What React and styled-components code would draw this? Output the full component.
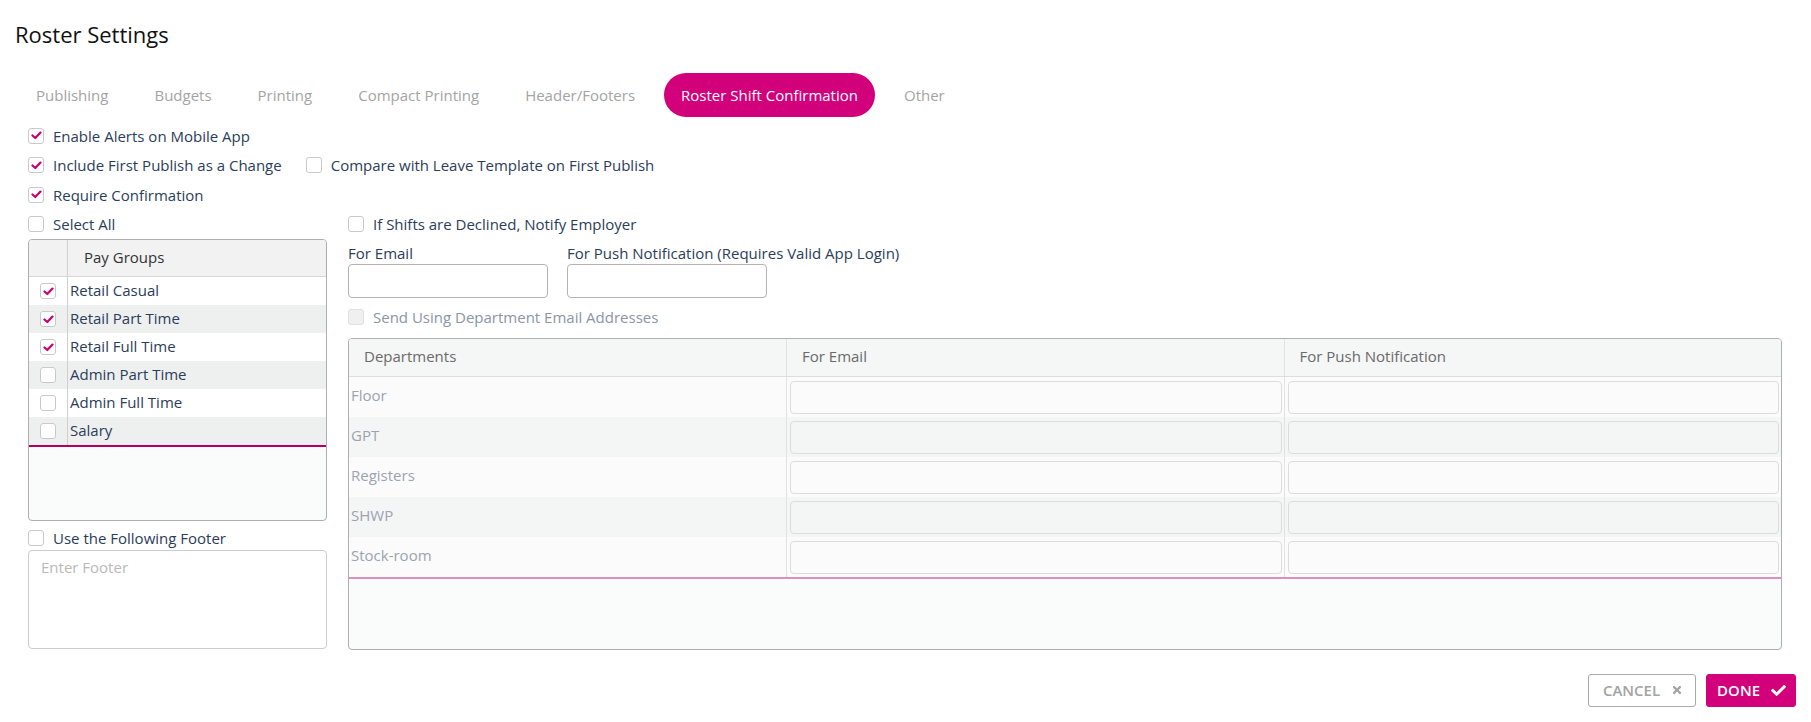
import React from "react";
import styled, { createGlobalStyle } from "styled-components";
import { FaTimes, FaCheck } from "react-icons/fa";

const GlobalStyle = createGlobalStyle`
  html, body { margin: 0; padding: 0; background: #ffffff; }
  body { font-family: "Open Sans", "Liberation Sans", sans-serif; color: #2d3e5b; }
  * { box-sizing: border-box; }
`;

const MAGENTA = "#d2007a";

const Page = styled.div`
  width: 1811px;
  min-height: 722px;
  display: flex;
  flex-direction: column;
`;

const Title = styled.h1`
  margin: 21px 0 0 15px;
  font-size: 22px;
  line-height: 26px;
  font-weight: 500;
  color: #111;
`;

const Tabs = styled.nav`
  display: flex;
  gap: 12px;
  margin: 26px 0 0 19px;
`;

const Tab = styled.div`
  height: 44px;
  padding: 0 17px;
  display: flex;
  align-items: center;
  border-radius: 22px;
  font-size: 15px;
  font-weight: 500;
  white-space: nowrap;
  color: ${(p) => (p.$active ? "#fff" : "#a4a4a4")};
  background: ${(p) => (p.$active ? MAGENTA : "transparent")};
`;

const Content = styled.div`
  margin: 4px 29px 0 28px;
  display: flex;
  flex-direction: column;
`;

const CheckRow = styled.div`
  height: 29.5px;
  display: flex;
  align-items: center;
  gap: 24px;
`;

const CheckItem = styled.label`
  display: flex;
  align-items: center;
  gap: 9px;
  font-size: 15px;
  font-weight: 500;
  color: ${(p) => (p.$muted ? "#8a95a6" : "#2b3d5a")};
  white-space: nowrap;
`;

const Box = styled.span`
  width: 16px;
  height: 16px;
  flex: none;
  border: 1px solid ${(p) => (p.$disabled ? "#e0e0e0" : "#c9c9c9")};
  border-radius: 3px;
  background: ${(p) => (p.$disabled ? "#f0f0f0" : "#fff")};
  display: flex;
  align-items: center;
  justify-content: center;
`;

const Check = ({ checked, disabled }) => (
  <Box $disabled={disabled}>
    {checked && (
      <svg width="11" height="9" viewBox="0 0 11 9">
        <path d="M1.5 4.5 L4.3 7 L9.5 1.6" fill="none" stroke="#c8006f" strokeWidth="2.2" strokeLinecap="round" strokeLinejoin="round" />
      </svg>
    )}
  </Box>
);

const Columns = styled.div`
  display: flex;
  gap: 21px;
`;

const LeftCol = styled.div`
  width: 299px;
  flex: none;
  display: flex;
  flex-direction: column;
`;

const RightCol = styled.div`
  flex: 1;
  display: flex;
  flex-direction: column;
`;

const TableFrame = styled.div`
  height: ${(p) => p.$h}px;
  border: 1px solid #aeaeae;
  border-radius: 4px;
  background: #fafbfb;
  overflow: hidden;
  display: flex;
  flex-direction: column;
`;

const PGRow = styled.div`
  display: grid;
  grid-template-columns: 39px 1fr;
  height: ${(p) => (p.$head ? 36 : 28)}px;
  background: ${(p) => (p.$head ? "#f2f2f2" : p.$alt ? "#eef0f0" : "#fff")};
  border-bottom: ${(p) => (p.$head ? "1px solid #d6d6d6" : p.$last ? `2px solid #b3005f` : "none")};
  box-sizing: content-box;
`;

const PGCheckCell = styled.div`
  display: flex;
  align-items: center;
  justify-content: center;
  border-right: 1px solid #cfcfcf;
`;

const PGText = styled.div`
  display: flex;
  align-items: center;
  padding-left: ${(p) => (p.$head ? 16 : 2)}px;
  padding-bottom: 2px;
  font-size: 15px;
  font-weight: 500;
  color: ${(p) => (p.$head ? "#333" : "#2b3d5a")};
`;

const FooterRow = styled(CheckRow)`
  height: 24px;
  margin-top: 5px;
`;

const FooterArea = styled.div`
  height: 99px;
  border: 1px solid #cccccc;
  border-radius: 4px;
  padding: 6px 12px;
  font-size: 15px;
  font-weight: 500;
  color: #b9b9b9;
`;

const Fields = styled.div`
  display: flex;
  gap: 19px;
  margin-top: 4px;
`;

const Field = styled.div`
  display: flex;
  flex-direction: column;
  gap: 1px;
`;

const FieldLabel = styled.div`
  font-size: 15px;
  line-height: 20px;
  color: #2b3d5a;
  font-weight: 500;
  white-space: nowrap;
`;

const TextInput = styled.div`
  width: 200px;
  height: 34px;
  border: 1px solid #b3b3b3;
  border-radius: 4px;
  background: #fff;
`;

const SendRow = styled(CheckRow)`
  margin-top: 4px;
`;

const DeptFrame = styled(TableFrame)`
  margin-top: 6px;
`;

const DeptRow = styled.div`
  display: grid;
  grid-template-columns: 437px 1fr 1fr;
  height: ${(p) => (p.$head ? 37 : 40)}px;
  box-sizing: content-box;
  background: ${(p) => (p.$head ? "#f5f6f6" : p.$alt ? "#f4f6f6" : "#fbfbfb")};
  border-bottom: ${(p) => (p.$head ? "1px solid #dddddd" : p.$last ? "2px solid #d993bb" : "none")};
`;

const DeptCell = styled.div`
  display: flex;
  align-items: center;
  padding: ${(p) => (p.$head ? "0 15px 2px" : p.$input ? "4px 2px 3px 3px" : "0 2px 3px")};
  border-left: ${(p) => (p.$first ? "none" : "1px solid #e2e2e2")};
  font-size: 15px;
  font-weight: 500;
  color: ${(p) => (p.$head ? "#6a6a6a" : "#9aa3b0")};
`;

const CellInput = styled.div`
  width: 100%;
  height: 100%;
  border: 1px solid #dcdcdc;
  border-radius: 4px;
`;

const Actions = styled.div`
  display: flex;
  justify-content: flex-end;
  gap: 10px;
  margin: 24px 15px 0 0;
`;

const Button = styled.button`
  height: 33px;
  display: flex;
  align-items: center;
  gap: 11px;
  padding: ${(p) => (p.$primary ? "0 9px 0 10px" : "0 12px 0 14px")};
  border-radius: 3px;
  font-family: "Open Sans", "Liberation Sans", sans-serif;
  font-size: 15px;
  font-weight: 600;
  border: 1px solid ${(p) => (p.$primary ? MAGENTA : "#aaaaaa")};
  background: ${(p) => (p.$primary ? MAGENTA : "#fff")};
  color: ${(p) => (p.$primary ? "#fff" : "#a3a3a3")};
  svg { flex: none; }
`;

const tabs = ["Publishing", "Budgets", "Printing", "Compact Printing", "Header/Footers", "Roster Shift Confirmation", "Other"];
const payGroups = [
  ["Retail Casual", true],
  ["Retail Part Time", true],
  ["Retail Full Time", true],
  ["Admin Part Time", false],
  ["Admin Full Time", false],
  ["Salary", false],
];
const depts = ["Floor", "GPT", "Registers", "SHWP", "Stock-room"];

export default function App() {
  return (
    <Page>
      <GlobalStyle />
      <Title>Roster Settings</Title>
      <Tabs>
        {tabs.map((t) => (
          <Tab key={t} $active={t === "Roster Shift Confirmation"}>{t}</Tab>
        ))}
      </Tabs>
      <Content>
        <CheckRow>
          <CheckItem><Check checked />Enable Alerts on Mobile App</CheckItem>
        </CheckRow>
        <CheckRow>
          <CheckItem><Check checked />Include First Publish as a Change</CheckItem>
          <CheckItem><Check />Compare with Leave Template on First Publish</CheckItem>
        </CheckRow>
        <CheckRow>
          <CheckItem><Check checked />Require Confirmation</CheckItem>
        </CheckRow>
        <Columns>
          <LeftCol>
            <CheckRow>
              <CheckItem><Check />Select All</CheckItem>
            </CheckRow>
            <TableFrame $h={282}>
              <PGRow $head>
                <PGCheckCell />
                <PGText $head>Pay Groups</PGText>
              </PGRow>
              {payGroups.map(([name, on], i) => (
                <PGRow key={name} $alt={i % 2 === 1} $last={i === payGroups.length - 1}>
                  <PGCheckCell><Check checked={on} /></PGCheckCell>
                  <PGText>{name}</PGText>
                </PGRow>
              ))}
            </TableFrame>
            <FooterRow>
              <CheckItem><Check />Use the Following Footer</CheckItem>
            </FooterRow>
            <FooterArea>Enter Footer</FooterArea>
          </LeftCol>
          <RightCol>
            <CheckRow>
              <CheckItem><Check />If Shifts are Declined, Notify Employer</CheckItem>
            </CheckRow>
            <Fields>
              <Field>
                <FieldLabel>For Email</FieldLabel>
                <TextInput />
              </Field>
              <Field>
                <FieldLabel>For Push Notification (Requires Valid App Login)</FieldLabel>
                <TextInput />
              </Field>
            </Fields>
            <SendRow>
              <CheckItem $muted><Check disabled />Send Using Department Email Addresses</CheckItem>
            </SendRow>
            <DeptFrame $h={312}>
              <DeptRow $head>
                <DeptCell $head $first>Departments</DeptCell>
                <DeptCell $head>For Email</DeptCell>
                <DeptCell $head>For Push Notification</DeptCell>
              </DeptRow>
              {depts.map((d, i) => (
                <DeptRow key={d} $alt={i % 2 === 1} $last={i === depts.length - 1}>
                  <DeptCell $first>{d}</DeptCell>
                  <DeptCell $input><CellInput /></DeptCell>
                  <DeptCell $input><CellInput /></DeptCell>
                </DeptRow>
              ))}
            </DeptFrame>
          </RightCol>
        </Columns>
      </Content>
      <Actions>
        <Button>CANCEL <FaTimes size={12} /></Button>
        <Button $primary>DONE <FaCheck size={15} /></Button>
      </Actions>
    </Page>
  );
}
